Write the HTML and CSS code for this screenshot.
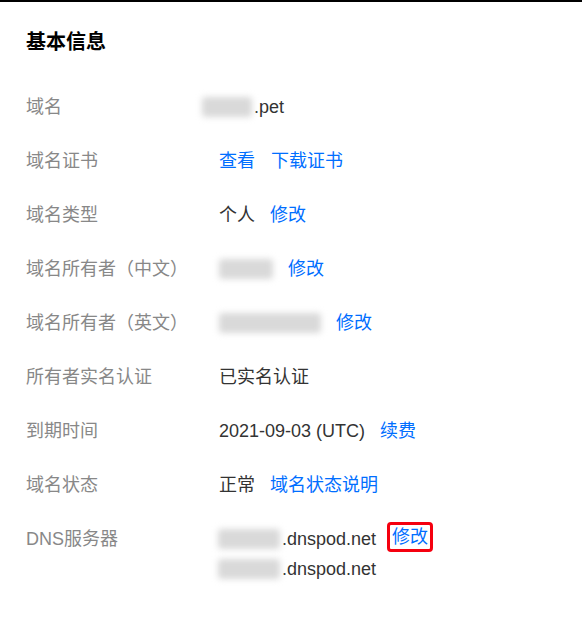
FILE: index.html
```html
<!DOCTYPE html>
<html lang="zh-CN">
<head>
<meta charset="utf-8">
<title>基本信息</title>
<link rel="stylesheet" href="styles.css">
</head>
<body>
<div class="topbar"></div>
<section class="card">
  <h2 class="title">基本信息</h2>
  <dl class="info">
    <div class="row"><dt>域名</dt><dd><span class="blur b-domain"></span>.pet</dd></div>
    <div class="row"><dt>域名证书</dt><dd class="items"><a>查看</a><a>下载证书</a></dd></div>
    <div class="row"><dt>域名类型</dt><dd class="items"><span>个人</span><a>修改</a></dd></div>
    <div class="row"><dt>域名所有者（中文）</dt><dd class="items"><span class="blur b-cn"></span><a>修改</a></dd></div>
    <div class="row"><dt>域名所有者（英文）</dt><dd class="items"><span class="blur b-en"></span><a>修改</a></dd></div>
    <div class="row"><dt>所有者实名认证</dt><dd>已实名认证</dd></div>
    <div class="row"><dt>到期时间</dt><dd class="items"><span>2021-09-03 (UTC)</span><a>续费</a></dd></div>
    <div class="row"><dt>域名状态</dt><dd class="items"><span>正常</span><a>域名状态说明</a></dd></div>
    <div class="row"><dt>DNS服务器</dt>
      <dd class="dns">
        <div class="ns"><span class="blur b-ns"></span>.dnspod.net<a class="marked">修改</a></div>
        <div class="ns"><span class="blur b-ns"></span>.dnspod.net</div>
      </dd>
    </div>
  </dl>
</section>
</body>
</html>
```
FILE: styles.css
```css
html, body {
  margin: 0;
  padding: 0;
  background: #fff;
}
body {
  font-family: "Liberation Sans", "Noto Sans CJK SC", sans-serif;
  font-size: 18px;
  color: #333;
}
.topbar {
  height: 2px;
  background: #000;
}
.card {
  padding: 26px 26px 0 26px;
}
.title {
  margin: 0 0 24px 0;
  font-size: 20px;
  line-height: 28px;
  font-weight: bold;
  color: #000;
}
.info {
  margin: 0;
}
.row {
  display: flex;
  padding: 12px 0;
  line-height: 30px;
}
.row dt {
  width: 193px;
  flex: none;
  color: #888;
}
.row dd {
  margin: 0;
  color: #333;
  display: flex;
  align-items: center;
}
.items {
  gap: 15px;
}
a {
  color: #006eff;
  cursor: pointer;
}
.items a + a {
  margin-left: 1px;
}
.blur {
  display: inline-block;
  height: 20px;
  background: #d9d9d9;
  filter: blur(3px);
  border-radius: 3px;
}
.b-domain {
  width: 50px;
  margin-left: -17px;
  margin-right: 2px;
}
.b-cn {
  width: 54px;
}
.b-en {
  width: 102px;
}
.b-ns {
  width: 62px;
  margin-left: -1px;
  margin-right: 2px;
}
.dns {
  flex-direction: column;
  align-items: flex-start !important;
}
.ns {
  display: flex;
  align-items: center;
  height: 30px;
}
.marked {
  display: inline-block;
  margin-left: 11px;
  padding: 0 2px;
  line-height: 24px;
  border: 3px solid #f5000f;
  border-radius: 4px;
  position: relative;
  top: -2px;
}
```
